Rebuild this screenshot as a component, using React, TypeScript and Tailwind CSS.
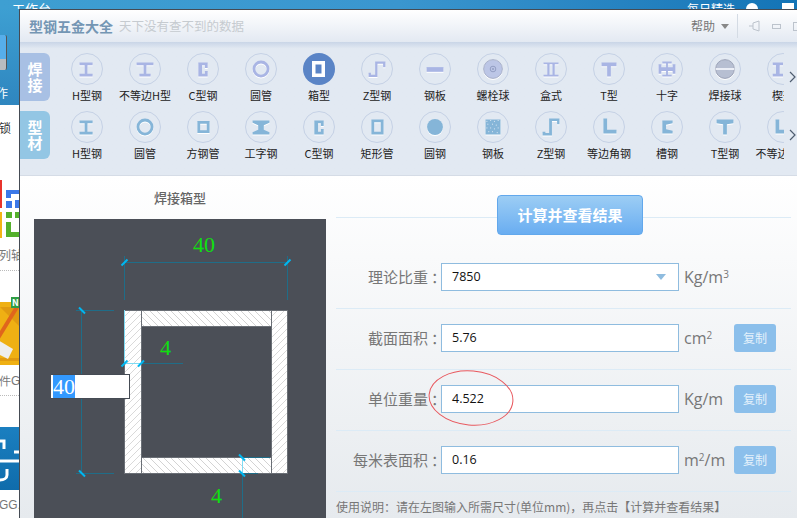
import type { ReactNode } from 'react';

const CJK = "font-['Noto_Sans_CJK_SC','Liberation_Sans',sans-serif]";

// all shapes are drawn in a 32x32 circle box, coloured with currentColor
const shapes: Record<string, ReactNode> = {
  h: <path d="M8 9h14v3h-5.5v9H22v3H8v-3h5.5v-9H8z" />,
  uneqH: <path d="M7 9h18v3h-7.5v9H22v3H10v-3h4.500v-9H7z" />,
  c: <path d="M11 9h10v6h-3v-3h-3v9h3v-3h3v6H11z" />,
  ring: <circle cx="16" cy="16" r="7.500" fill="none" stroke="currentColor" strokeWidth="3" />,
  box: <path fillRule="evenodd" d="M9 8h13v16H9zM12.500 11.500v9h6v-9z" />,
  square: <path fillRule="evenodd" d="M10 9.500h13v13H10zM13 12.500v7h7v-7z" />,
  rect: <path fillRule="evenodd" d="M10 8h13v16H10zM13 11v10h7V11z" />,
  z: <path d="M7 20h2.500v2H14V8h11v6h-2.500v-3.500H16.500V24.500H7z" />,
  plate: <rect x="7" y="14" width="18" height="5" />,
  bolt: (
    <>
      <circle cx="16" cy="16" r="10" fill="#bcc6e6" stroke="#a5aec6" />
      <circle cx="16" cy="16" r="3" fill="none" stroke="#8f9bc0" />
      <circle cx="16" cy="16" r="1" fill="#8f9bc0" />
    </>
  ),
  boxBeam: <path d="M8 9h16v2h-4v11h4v2H8v-2h4V11H8zM14.500 11v11h3V11z" fillRule="evenodd" />,
  t: <path d="M8 9h16v4h-6v11h-4V13H8z" />,
  cross: <path d="M11 8h10v2h-4v4h5v-3h3v10h-3v-3h-5v4h4v2H11v-2h4v-4h-5v3H7V11h3v3h5v-4h-4z" />,
  ball: (
    <>
      <circle cx="16" cy="16" r="10" fill="#b7bfd2" stroke="#979fb4" />
      <rect x="6" y="15" width="20" height="2" fill="#eef2f8" />
    </>
  ),
  wedge: <path d="M5 9h11v3h-3.500v9H16v3H5v-3h3.500v-9H5zM20 9h4v15h-4z" />,
  i: <path d="M7 9h18v2.500l-6 2.500v5l6 2.500V24H7v-2.500l6-2.500v-5l-6-2.500z" />,
  round: <circle cx="16" cy="16" r="8.500" />,
  mesh: (
    <>
      <rect x="8" y="8" width="16" height="16" />
      <path d="M9 10h1M13 9h1M17 10h1M21 9h1M10 13h1M15 13h1M19 14h1M9 17h1M13 17h1M17 18h1M21 17h1M11 21h1M15 21h1M20 22h1" stroke="#e6eef6" />
    </>
  ),
  zStep: <path d="M7 21h3v1.500h4V7h11v6h-2.500v-3.500H17V25H7z" />,
  angle: <path d="M10 7h4v12h10v4H10z" />,
  channel: <path d="M11 9h11v3l-7 1.500v5l7 1.500v3H11z" />,
  wideT: <path d="M7 8h18v4l-7 1v11h-4V13l-7-1z" />,
  angleClip: <path d="M8 8h4v11h10v4H8z" />,
};

const weldItems = [
  ['H型钢', 'h'],
  ['不等边H型', 'uneqH'],
  ['C型钢', 'c'],
  ['圆管', 'ring'],
  ['箱型', 'box'],
  ['Z型钢', 'z'],
  ['钢板', 'plate'],
  ['螺栓球', 'bolt'],
  ['盒式', 'boxBeam'],
  ['T型', 't'],
  ['十字', 'cross'],
  ['焊接球', 'ball'],
  ['楔形', 'wedge'],
];

const profileItems = [
  ['H型钢', 'h'],
  ['圆管', 'ring'],
  ['方钢管', 'square'],
  ['工字钢', 'i'],
  ['C型钢', 'c'],
  ['矩形管', 'rect'],
  ['圆钢', 'round'],
  ['钢板', 'mesh'],
  ['Z型钢', 'zStep'],
  ['等边角钢', 'angle'],
  ['槽钢', 'channel'],
  ['T型钢', 'wideT'],
  ['不等边角钢', 'angleClip'],
];

function ShapeItem({ label, shape, active, tint }: { label: string; shape: string; active?: boolean; tint: string }) {
  return (
    <div className="w-[58px] shrink-0 flex flex-col items-center">
      <div className={`w-8 h-8 rounded-full ${active ? 'bg-[#5a84c6] text-white' : `border border-[#c5d1e5] ${tint}`}`}>
        <svg viewBox="0 0 32 32" className={active ? 'w-8 h-8' : 'w-[30px] h-[30px] drop-shadow-[0_1px_0_#ffffff]'} fill="currentColor">
          {shapes[shape]}
        </svg>
      </div>
      <span className="mt-[2px] text-[11px] leading-[16px] text-[#222] whitespace-nowrap">{label}</span>
    </div>
  );
}

function ShapeRow({ tab, tabColor, tint, items, activeIndex }: { tab: string[]; tabColor: string; tint: string; items: string[][]; activeIndex?: number }) {
  return (
    <div className="flex h-12">
      <div className={`w-[30px] rounded-r-md ${tabColor} flex flex-col items-center justify-center text-[15px] leading-[16px] font-bold text-white`}>
        {tab.map((c) => (
          <span key={c}>{c}</span>
        ))}
      </div>
      <div className="ml-2 w-[726px] flex overflow-hidden">
        {items.map(([label, shape], i) => (
          <ShapeItem key={label + i} label={label} shape={shape} tint={tint} active={i === activeIndex} />
        ))}
      </div>
      <svg viewBox="0 0 8 12" className="ml-[5px] mt-[18px] w-2 h-3 text-[#4f5d70]" fill="none" stroke="currentColor" strokeWidth="1.2">
        <path d="M1 1l5 5-5 5" />
      </svg>
    </div>
  );
}

function Drawing() {
  const dim = '#1f6d88';
  const tick = '#00b7f1';
  const ticks = [
    [124.5, 262.5, 1], [287.5, 262.5, 1],
    [82, 310.5, -1], [82, 473.5, -1],
    [124.5, 363.5, 1], [141, 363.5, 1],
    [242, 457.5, -1], [242, 473.5, -1],
  ];
  return (
    <svg viewBox="34 219 292 299" className="w-[292px] h-[299px]">
      <defs>
        <pattern id="up" width="7" height="7" patternUnits="userSpaceOnUse">
          <rect width="7" height="7" fill="#fff" />
          <path d="M-1 8L8-1M-1 1L1-1M6 8L8 6" stroke="#cfcfcf" strokeWidth="0.8" />
        </pattern>
        <pattern id="down" width="7" height="7" patternUnits="userSpaceOnUse">
          <rect width="7" height="7" fill="#fff" />
          <path d="M-1-1L8 8M-1 6L1 8M6-1L8 1" stroke="#c8c8c8" strokeWidth="0.8" />
        </pattern>
      </defs>
      <g stroke="#6a6f76">
        <rect x="124.500" y="310.500" width="17" height="163" fill="url(#up)" />
        <rect x="271.500" y="310.500" width="16" height="163" fill="url(#up)" />
        <rect x="141.500" y="310.500" width="130" height="16" fill="url(#down)" />
        <rect x="141.500" y="457.500" width="130" height="16" fill="url(#down)" />
      </g>
      <path
        d="M124.500 256V300M287.500 256V300M124 262.500H288M76 310.500H114M76 473.500H114M81.500 310V473M141 363.500H183M242.500 473V518M242 457.500H270M242 473.500H258"
        stroke={dim}
        fill="none"
      />
      <path d="M124.500 310V363M124 363.500H141M242.500 457V473" stroke="#7fdcf5" fill="none" />
      {ticks.map(([x, y, dir]) => (
        <line key={`${x}-${y}`} x1={x - 3} y1={y + 3 * dir} x2={x + 3} y2={y - 3 * dir} stroke={tick} strokeWidth="2" />
      ))}
      <g fill="#0fe00f" fontFamily="'Liberation Serif', serif" fontSize="22">
        <text x="193" y="252">40</text>
        <text x="160" y="355">4</text>
        <text x="211" y="503">4</text>
      </g>
    </svg>
  );
}

function Row({ label, value, unit, copy, select, pt = 'pt-[15px]', h = 'h-[61px]' }: { label: string; value: string; unit: ReactNode; copy?: boolean; select?: boolean; pt?: string; h?: string }) {
  return (
    <div className={`${h} ${pt} flex items-start border-b border-[#dcebf6]`}>
      <div className="w-[101px] h-7 flex justify-end text-[15px] leading-7 text-[#777] whitespace-nowrap">
        {label}
        <span className="w-[9px] pl-[3px]">：</span>
      </div>
      <div className="ml-1 w-[238px] h-7 bg-white border border-[#8fbcdf] pl-[10px] pr-3 flex items-center justify-between font-['Open_Sans',sans-serif] text-[12.5px] text-[#111]">
        {value}
        {select && <span className="w-0 h-0 border-x-[5px] border-x-transparent border-t-[6px] border-t-[#8fbcdf]" />}
      </div>
      <div className="ml-[5px] w-[50px] h-7 font-['Open_Sans',sans-serif] text-[16px] leading-7 text-[#777] whitespace-nowrap">{unit}</div>
      {copy && <div className="w-[42px] h-7 rounded-[3px] bg-[#8bbfeb] text-center text-[12px] leading-7 text-[#e4f1fb]">复制</div>}
    </div>
  );
}

function LeftStrip() {
  return (
    <div className="w-[19px] shrink-0 flex flex-col bg-white overflow-hidden text-[12px] text-[#666] whitespace-nowrap">
      <div className="h-[96px] shrink-0 bg-gradient-to-b from-[#3d9fd2] to-[#2f86bf] pt-[26px]">
        <div className="w-[7px] h-[35px] rounded-r-[2px] bg-gradient-to-b from-[#56aeea] from-70% to-[#b8bcc0] to-70% border-r border-[#555]" />
        <div className="mt-[15px] text-white leading-[16px] -ml-[4px]">作</div>
      </div>
      <div className="mt-[15px] leading-[16px] -ml-[1px] text-[#333]">锁</div>
      <svg viewBox="0 0 19 58" className="mt-[44px] w-[19px] h-[58px] shrink-0">
        <rect x="-2" y="0" width="4" height="28" fill="#e8342c" />
        <rect x="-2" y="32" width="4" height="26" fill="#f3b416" />
        <path d="M6 10h13v4H11v4H6zM6 21h6v7H6zM15 20h4v8h-4z" fill="#3b78e8" />
        <path d="M6 32h6v6H6zM15 32h4v6h-4zM6 42h5v10h8v5H6z" fill="#54b02c" />
      </svg>
      <div className="mt-[9px] leading-[16px] -ml-[1px] text-[#777]">列轴</div>
      <div className="mt-[7px] border-t border-dotted border-[#bbb]" />
      <div className="mt-[26px] h-[68px] shrink-0 relative">
        <div className="absolute inset-x-0 bottom-0 h-[63px] bg-[#efb013]" />
        <svg viewBox="0 0 19 63" className="absolute left-0 bottom-0 w-[19px] h-[63px]">
          <path d="M0 5L19 24V5zM0 56h19v3H0z" fill="#e09a10" />
          <path d="M-2 36L17 5" stroke="#e0661c" strokeWidth="4" />
          <path d="M-2 38L13 47L8 57L-2 52z" fill="#eee" />
        </svg>
        <div className="absolute top-0 right-0 w-2 h-[11px] bg-[#2f9e44] text-[9px] leading-[11px] text-white font-bold pl-[1px]">N</div>
      </div>
      <div className="mt-[8px] leading-[16px] -ml-[1px] text-[#777] font-['Liberation_Sans',sans-serif]">件GI</div>
      <div className="mt-[6px] border-t border-dotted border-[#bbb]" />
      <div className="mt-[31px] h-[63px] shrink-0 bg-gradient-to-b from-[#1b7fc0] to-[#0f6cab] relative">
        <svg viewBox="0 0 19 63" className="absolute inset-0 w-[19px] h-[63px]" fill="none" stroke="#fff">
          <path d="M-4 14h8v8M14 25h5M0 34h19" strokeWidth="3" />
          <path d="M7 42v6c0 3-3 5-7 5" strokeWidth="3" />
        </svg>
      </div>
      <div className="mt-[7px] leading-[16px] -ml-[1px] text-[#777] font-['Liberation_Sans',sans-serif]">GG.</div>
    </div>
  );
}

export default function App() {
  return (
    <div className={`w-[797px] h-[518px] overflow-hidden bg-white relative ${CJK}`}>
      {/* window behind the dialog, only the top strip and left edge show */}
      <div className="h-[9px] bg-gradient-to-r from-[#3e9fd2] via-[#3a96cf] to-[#1374b6] overflow-hidden">
        <div className="flex pl-[12px] pt-[2px] leading-[14px] text-white">
          <span className="text-[13px]">工作台</span>
          <span className="ml-auto text-[12px]">每日精选</span>
          <span className="ml-[11px] mt-[1px] w-3 h-3 bg-white rounded-t-full" />
          <span className="ml-[24px] mr-[3px] mt-[1px] w-3 h-3 bg-white" />
        </div>
      </div>

      <div className="flex h-[509px]">
        <LeftStrip />

        <div className="flex-1 flex flex-col border-l border-t border-[#454b54] min-w-0">
          <div className="h-8 shrink-0 flex items-center overflow-hidden bg-gradient-to-b from-white to-[#e3e9f2] pl-[9px]">
            <span className="text-[14px] font-bold text-[#7496b4]">型钢五金大全</span>
            <span className="ml-[6px] text-[12.500px] text-[#c6cbd0]">天下没有查不到的数据</span>
            <span className="ml-auto text-[12px] text-[#777]">帮助</span>
            <span className="ml-[6px] w-0 h-0 border-x-[4px] border-x-transparent border-t-[5px] border-t-[#888]" />
            <span className="ml-2 w-px h-6 bg-[#d4dbe4]" />
            <svg viewBox="0 0 12 12" className="ml-[11px] w-3 h-3 shrink-0" fill="none" stroke="#bcc3cc">
              <path d="M0 6h4M4 3v6l6 2V1z" />
            </svg>
            <span className="ml-[11px] w-[9px] h-[5px] border border-[#bcc3cc] shrink-0" />
            <span className="ml-3 -mr-[8px] w-3 h-[9px] border border-[#bcc3cc] shrink-0" />
          </div>

          <div className="h-[134px] shrink-0 pt-[11px] flex flex-col gap-[10px] bg-gradient-to-b from-[#c9d5e7] from-0% via-[#e2e9f2] via-5% to-[#e2e9f2] border-b border-[#d5dce6]">
            <ShapeRow tab={['焊', '接']} tabColor="bg-[#a8c0e4]" tint="text-[#a9b5e4]" items={weldItems} activeIndex={4} />
            <ShapeRow tab={['型', '材']} tabColor="bg-[#93c6e4]" tint="text-[#85b5d8]" items={profileItems} />
          </div>

          <div className="flex-1 flex min-h-0 bg-gradient-to-b from-white to-[#e6eaee]">
            <div className="w-[316px] shrink-0 pl-[14px]">
              <div className="h-[43px] pt-3 pr-[10px] text-center text-[13px] leading-5 font-medium text-[#666]">焊接箱型</div>
              <div className="relative w-[292px] h-[299px] bg-[#4b4f57]">
                <Drawing />
                <div className="absolute left-[17px] top-[155px] w-[79px] h-[25px] bg-white border-y border-r border-[#454b54] pl-[2px] font-['Liberation_Serif',serif] text-[22px] leading-[23px] text-white">
                  <span className="inline-block bg-[#3399ff]">40</span>
                </div>
              </div>
            </div>

            <div className="w-[455px] shrink-0 flex flex-col">
              <div className="h-[42px] shrink-0 pt-[19px] pl-[13px] flex justify-center border-b border-[#dcebf6]">
                <button className="relative w-[146px] h-10 rounded-[4px] border border-[#62a8ec] bg-gradient-to-b from-[#9ccdf4] to-[#69adf1] text-[15px] font-bold text-white">
                  计算并查看结果
                </button>
              </div>
              <Row label="理论比重" value="7850" select pt="pt-[45px]" h="h-[91px]" unit={<>Kg/m<sup className="text-[10px]">3</sup></>} />
              <Row label="截面面积" value="5.76" copy unit={<>cm<sup className="text-[10px]">2</sup></>} />
              <Row label="单位重量" value="4.522" copy unit="Kg/m" />
              <Row label="每米表面积" value="0.16" copy unit={<>m<sup className="text-[10px]">2</sup>/m</>} />
              <div className="pt-[6px] text-[12px] leading-[18px] text-[#777] whitespace-nowrap">
                使用说明：请在左图输入所需尺寸(单位mm)，再点击【计算并查看结果】
              </div>
            </div>
          </div>
        </div>
      </div>

      {/* hand drawn red mark over the weight field */}
      <svg viewBox="0 0 86 58" className="absolute left-[428px] top-[369px] w-[86px] h-[58px]" fill="none">
        <ellipse cx="43" cy="29" rx="42" ry="27" stroke="#e8585e" transform="rotate(5 43 29)" />
      </svg>
    </div>
  );
}
